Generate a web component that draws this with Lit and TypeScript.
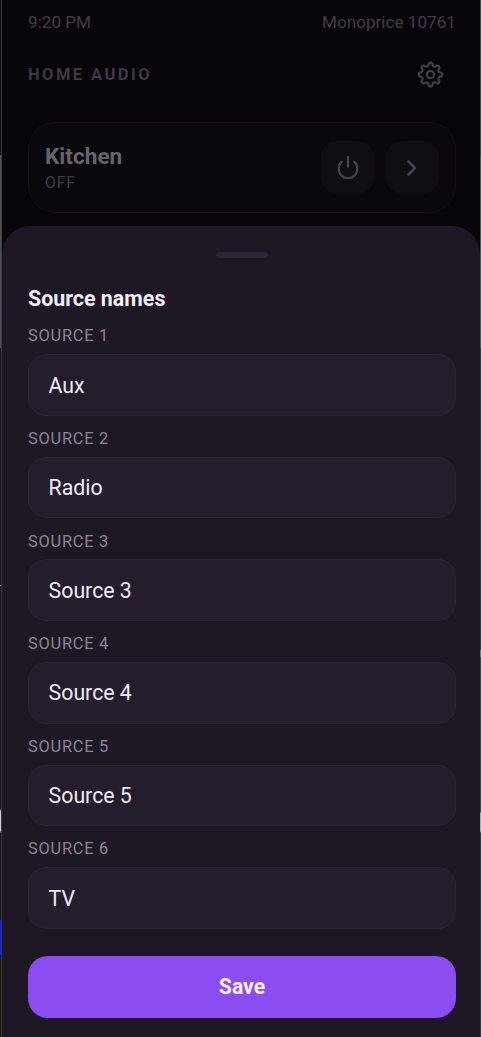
import { LitElement, html, css, svg } from "lit";
import { customElement, property, state } from "lit/decorators.js";

const gearPath = (() => {
  // Eight rounded teeth around the hub, with concave valleys between them.
  const p = (r: number, deg: number) => {
    const a = (deg * Math.PI) / 180;
    return `${(12 + r * Math.sin(a)).toFixed(2)} ${(12 - r * Math.cos(a)).toFixed(2)}`;
  };
  let d = `M${p(8.6, -12)}`;
  for (let i = 0; i < 8; i++) {
    const a = i * 45;
    d += `C${p(10, a - 11)} ${p(10.5, a - 8)} ${p(10.6, a)}`;
    d += `C${p(10.5, a + 8)} ${p(10, a + 11)} ${p(8.6, a + 12)}`;
    d += `C${p(7.5, a + 17)} ${p(7.5, a + 28)} ${p(8.6, a + 33)}`;
  }
  return d + "Z";
})();

@customElement("source-field")
class SourceField extends LitElement {
  @property() label = "";
  @property() value = "";

  static styles = css`
    :host { display: block; }
    .label {
      display: block;
      height: 41px;
      box-sizing: border-box;
      padding-top: 13.2px;
      font-size: 16.4px;
      line-height: 20px;
      letter-spacing: 0.75px;
      color: #8d8399;
    }
    .input {
      display: flex;
      align-items: center;
      height: 61.6px;
      box-sizing: border-box;
      padding: 0 19.6px;
      border: 1.3px solid #2c2535;
      border-radius: 18px;
      background: #241d2c;
      color: #f1ebfa;
      font-size: 21.3px;
    }
  `;

  render() {
    return html`<span class="label">${this.label}</span>
      <div class="input">${this.value}</div>`;
  }
}

@customElement("app-root")
class AppRoot extends LitElement {
  @state() private sources = ["Aux", "Radio", "Source 3", "Source 4", "Source 5", "TV"];

  static styles = css`
    :host {
      display: block;
      height: 1037px;
      overflow: hidden;
      font-family: Roboto, sans-serif;
      background: #070509;
    }
    .frame {
      display: grid;
      grid-template-columns: 1px 1px minmax(0, 1fr) 1px;
      height: 100%;
    }
    .outer {
      background: linear-gradient(
        #101010 0 155px, #555 155px 348px, #181818 348px 585px, #777 585px 586px,
        #181818 586px 809px, #ccc 811px 831px, #151515 833px 920px,
        #1527c8 920px 955px, #101810 955px
      );
    }
    .rim { background: #3b3a39; }
    .right {
      background: linear-gradient(
        #454545 0 155px, #555 155px 348px, #3a3a3c 348px 650px, #777 650px 657px,
        #444 657px 812px, #aaa 813px 831px, #353b3d 833px
      );
    }
    .screen { display: flex; flex-direction: column; height: 1037px; }
    .status, .header, .card, .actions { display: flex; align-items: center; }
    .status {
      justify-content: space-between;
      height: 44px;
      padding: 0 24px 0 26px;
      font-size: 17.15px;
      color: #423e47;
    }
    .header {
      justify-content: space-between;
      height: 60px;
      padding: 1px 36.2px 0 26px;
      box-sizing: border-box;
    }
    .brand {
      font-size: 16.5px;
      font-weight: 700;
      letter-spacing: 2.45px;
      color: #3e3945;
    }
    .icon { display: block; fill: none; stroke: #47434c; stroke-linecap: round; stroke-linejoin: round; }
    .card {
      flex: none;
      justify-content: space-between;
      box-sizing: border-box;
      height: 91px;
      margin: 18px 24px 12.5px 26px;
      padding: 0 16.5px 0 16px;
      border: 1px solid #111015;
      border-radius: 27px;
      background: #09080d;
    }
    .room { font-size: 22.6px; line-height: 27px; font-weight: 700; color: #67646a; }
    .state { font-size: 15.7px; line-height: 20px; letter-spacing: 0.9px; color: #403c45; margin-top: 3px; }
    .actions { gap: 11.5px; }
    .button {
      display: grid;
      place-items: center;
      width: 53px;
      height: 53px;
      border-radius: 16px;
      background: #100d13;
    }
    .sheet {
      flex: 1;
      display: flex;
      flex-direction: column;
      border-radius: 28px 28px 0 0;
      background: #1e1724;
      padding: 26px 24px 0 26px;
    }
    .handle { flex: none; align-self: center; width: 52px; height: 6.5px; border-radius: 4px; background: #2d2438; }
    .title {
      margin: 28px 0 1.3px;
      font-size: 21.4px;
      line-height: 26px;
      font-weight: 700;
      color: #f3edfc;
    }
    .save {
      flex: none;
      display: grid;
      place-items: center;
      height: 62px;
      margin-top: 27px;
      border-radius: 20px;
      background: #8b4df2;
      color: #f7f0ff;
      font-size: 21.2px;
      font-weight: 700;
    }
  `;

  render() {
    return html`
      <div class="frame">
        <div class="outer"></div>
        <div class="rim"></div>
        <div class="screen">
          <div class="status"><span>9:20 PM</span><span>Monoprice 10761</span></div>
          <div class="header">
            <span class="brand">HOME AUDIO</span>
            <svg class="icon" width="27" height="27" viewBox="0 0 24 24" stroke-width="1.75">
              ${svg`<path d=${gearPath}></path>`}
              <circle cx="12" cy="12" r="3.2"></circle>
            </svg>
          </div>
          <div class="card">
            <div>
              <div class="room">Kitchen</div>
              <div class="state">OFF</div>
            </div>
            <div class="actions">
              <div class="button">
                <svg class="icon" width="28" height="28" viewBox="0 0 28 28" stroke-width="2.2">
                  <path d="M14 2.8V12.8M7.8 7.6A9.4 9.4 0 1 0 20.2 7.6"></path>
                </svg>
              </div>
              <div class="button">
                <svg class="icon" width="28" height="28" viewBox="0 0 28 28" stroke-width="2.6">
                  <path d="M10.5 7.5L17 14L10.5 20.5"></path>
                </svg>
              </div>
            </div>
          </div>
          <div class="sheet">
            <div class="handle"></div>
            <h2 class="title">Source names</h2>
            ${this.sources.map(
              (name, i) => html`<source-field label=${`SOURCE ${i + 1}`} value=${name}></source-field>`
            )}
            <div class="save">Save</div>
          </div>
        </div>
        <div class="right"></div>
      </div>
    `;
  }
}
